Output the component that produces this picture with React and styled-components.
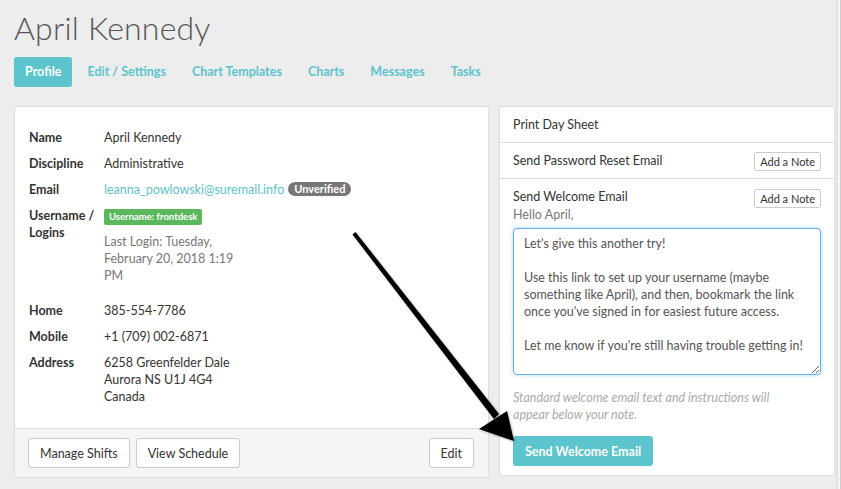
import React from 'react';
import styled, { createGlobalStyle } from 'styled-components';

const teal = '#5bc4cc';

const GlobalStyle = createGlobalStyle`
	html, body {
		margin: 0;
		padding: 0;
		background: #ededed;
		font-family: Lato, 'Open Sans', sans-serif;
		font-size: 12.5px;
		color: #333;
	}
	* { box-sizing: border-box; }
`;

const Page = styled.div`
	position: relative;
	display: flex;
	width: 841px;
	height: 489px;
	overflow: hidden;
`;

const Main = styled.div`
	flex: 1;
	padding: 0 1px 0 14px;
`;

const Edge = styled.div`
	width: 5px;
	background: #f6f6f6;
	border-left: 2px solid #e2e2e2;
	border-right: 1px solid #cfcfcf;
`;

const Title = styled.h1`
	margin: 8px 0 0;
	font-size: 32px;
	line-height: 40px;
	font-weight: 300;
	letter-spacing: 0.2px;
	color: #555;
`;

const Tabs = styled.nav`
	display: flex;
	gap: 4px;
	margin-top: 9px;
`;

const Tab = styled.a`
	display: block;
	height: 30px;
	padding: 0 11px;
	line-height: 30px;
	font-size: 12.5px;
	font-weight: 700;
	border-radius: 3px;
	color: ${(p) => (p.$active ? '#fff' : teal)};
	background: ${(p) => (p.$active ? teal : 'transparent')};
`;

const Columns = styled.div`
	display: grid;
	grid-template-columns: 475px 336px;
	gap: 10px;
	margin-top: 19px;
	align-items: start;
`;

const Panel = styled.div`
	background: #fff;
	border: 1px solid #ddd;
	border-radius: 3px;
	overflow: hidden;
`;

const PanelBody = styled.div`
	padding: 22px 14px 14px;
`;

const Row = styled.div`
	display: grid;
	grid-template-columns: 75px 1fr;
	line-height: 17px;
	margin-bottom: ${(p) => p.$gap || 9}px;
`;

const Label = styled.div`
	font-weight: 700;
	color: #333;
`;

const Value = styled.div`
	color: #333;
`;

const Link = styled.a`
	color: ${teal};
`;

const Pill = styled.span`
	display: inline-block;
	margin-left: 4px;
	padding: 0 6px;
	height: 14px;
	line-height: 14px;
	border-radius: 7px;
	background: #777;
	color: #fff;
	font-size: 11px;
	font-weight: 700;
	vertical-align: 1px;
`;

const Tag = styled.span`
	display: inline-block;
	margin-top: 2px;
	padding: 0 5px;
	height: 16px;
	line-height: 16px;
	border-radius: 2px;
	background: #5cb85c;
	color: #fff;
	font-size: 9.5px;
	font-weight: 700;
`;

const Muted = styled.div`
	color: #777;
	margin-top: 8px;
	width: 140px;
`;

const Footer = styled.div`
	display: flex;
	gap: 6px;
	padding: 9px 14px 9px 13px;
	background: #f5f5f5;
	border-top: 1px solid #ddd;
`;

const Button = styled.button`
	height: 30px;
	padding: 0 11px;
	background: #fff;
	border: 1px solid #ccc;
	border-radius: 3px;
	font-family: inherit;
	font-size: 12.5px;
	color: #333;
	margin-left: ${(p) => (p.$push ? 'auto' : '0')};
`;

const Action = styled.div`
	padding: 9px 13px 9px 13px;
	border-bottom: ${(p) => (p.$last ? 'none' : '1px solid #ddd')};
	line-height: 17px;
`;

const ActionHead = styled.div`
	display: flex;
	justify-content: space-between;
	align-items: center;
	height: 17px;
`;

const SmallButton = styled.button`
	height: 19px;
	padding: 0 5px;
	background: #fff;
	border: 1px solid #ccc;
	border-radius: 2px;
	font-family: inherit;
	font-size: 11px;
	color: #333;
	margin-top: ${(p) => (p.$up ? '3px' : '1px')};
`;

const Greeting = styled.div`
	color: #777;
	margin-top: 1px;
`;

const Note = styled.textarea`
	display: block;
	width: 308px;
	height: 147px;
	margin-top: 5px;
	padding: 6px 10px;
	border: 1px solid #66afe9;
	border-radius: 4px;
	box-shadow: 0 0 4px rgba(102, 175, 233, 0.5);
	font-family: inherit;
	font-size: 12.5px;
	line-height: 17px;
	color: #555;
	resize: vertical;
	outline: none;
`;

const Help = styled.p`
	margin: 14px 0 13px;
	max-width: 290px;
	color: #aaa;
	font-style: italic;
	line-height: 17px;
`;

const Primary = styled.button`
	height: 30px;
	padding: 0 12px;
	border: none;
	border-radius: 3px;
	background: ${teal};
	color: #fff;
	font-family: inherit;
	font-size: 12.5px;
	font-weight: 700;
`;

const Overlay = styled.svg`
	position: absolute;
	left: 0;
	top: 0;
	pointer-events: none;
`;

const noteText = `Let's give this another try!

Use this link to set up your username (maybe something like April), and then, bookmark the link once you've signed in for easiest future access.

Let me know if you're still having trouble getting in!`;

const App = () => {
	return (
		<Page>
			<GlobalStyle />
			<Main>
				<Title>April Kennedy</Title>
				<Tabs>
					<Tab $active>Profile</Tab>
					<Tab>Edit / Settings</Tab>
					<Tab>Chart Templates</Tab>
					<Tab>Charts</Tab>
					<Tab>Messages</Tab>
					<Tab>Tasks</Tab>
				</Tabs>
				<Columns>
					<Panel>
						<PanelBody>
							<Row>
								<Label>Name</Label>
								<Value>April Kennedy</Value>
							</Row>
							<Row>
								<Label>Discipline</Label>
								<Value>Administrative</Value>
							</Row>
							<Row>
								<Label>Email</Label>
								<Value>
									<Link>leanna_powlowski@suremail.info</Link>
									<Pill>Unverified</Pill>
								</Value>
							</Row>
							<Row $gap={18}>
								<Label>Username / Logins</Label>
								<Value>
									<Tag>Username: frontdesk</Tag>
									<Muted>Last Login: Tuesday, February 20, 2018 1:19 PM</Muted>
								</Value>
							</Row>
							<Row>
								<Label>Home</Label>
								<Value>385-554-7786</Value>
							</Row>
							<Row>
								<Label>Mobile</Label>
								<Value>+1 (709) 002-6871</Value>
							</Row>
							<Row>
								<Label>Address</Label>
								<Value>
									6258 Greenfelder Dale
									<br />
									Aurora NS U1J 4G4
									<br />
									Canada
								</Value>
							</Row>
						</PanelBody>
						<Footer>
							<Button>Manage Shifts</Button>
							<Button>View Schedule</Button>
							<Button $push>Edit</Button>
						</Footer>
					</Panel>
					<Panel>
						<Action>Print Day Sheet</Action>
						<Action>
							<ActionHead>
								Send Password Reset Email
								<SmallButton>Add a Note</SmallButton>
							</ActionHead>
						</Action>
						<Action $last>
							<ActionHead>
								Send Welcome Email
								<SmallButton $up>Add a Note</SmallButton>
							</ActionHead>
							<Greeting>Hello April,</Greeting>
							<Note defaultValue={noteText} />
							<Help>
								Standard welcome email text and instructions will appear below
								your note.
							</Help>
							<Primary>Send Welcome Email</Primary>
						</Action>
					</Panel>
				</Columns>
			</Main>
			<Edge />
			<Overlay width="841" height="489" viewBox="0 0 841 489">
				<defs>
					<filter id="shade" x="-10%" y="-10%" width="120%" height="120%">
						<feDropShadow dx="1" dy="1" stdDeviation="1" floodOpacity="0.3" />
					</filter>
				</defs>
				<g filter="url(#shade)" fill="#000">
					<polygon points="352.5,234.5 355.5,232 499,414 494,419" />
					<polygon points="514,441 479,429 507,411" />
				</g>
			</Overlay>
		</Page>
	);
};

export default App;
